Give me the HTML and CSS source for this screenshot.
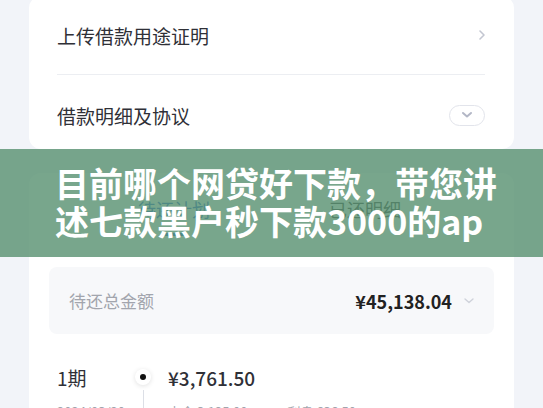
FILE: index.html
```html
<!DOCTYPE html>
<html lang="zh-CN">
<head>
    <meta charset="UTF-8">
    <title>借款详情</title>
    <link rel="stylesheet" href="styles.css">
</head>
<body>
    <div class="page">
        <div class="card card-menu">
            <div class="menu-row">
                <span>上传借款用途证明</span>
                <svg class="arrow-right" width="8" height="12" viewBox="0 0 8 12"><path d="M2 2l4 4-4 4" fill="none" stroke="#c3c6d1" stroke-width="1.6" stroke-linecap="round" stroke-linejoin="round"/></svg>
            </div>
            <div class="divider"></div>
            <div class="menu-row menu-row-last">
                <span>借款明细及协议</span>
                <span class="pill">
                    <svg width="12" height="8" viewBox="0 0 12 8"><path d="M2 2l4 3.5L10 2" fill="none" stroke="#b3b7c6" stroke-width="2" stroke-linecap="round" stroke-linejoin="round"/></svg>
                </span>
            </div>
        </div>

        <div class="card card-plan">
            <div class="tabs">
                <div class="tab active">
                    <span>待还计划</span>
                    <i class="tab-bar"></i>
                </div>
                <div class="tab">
                    <span>已还明细</span>
                </div>
            </div>

            <div class="summary">
                <span class="summary-label">待还总金额</span>
                <div class="summary-right">
                    <span class="summary-amount">¥45,138.04</span>
                    <svg width="12" height="8" viewBox="0 0 12 8"><path d="M2 2l4 3.5L10 2" fill="none" stroke="#cfd2da" stroke-width="1.4" stroke-linecap="round" stroke-linejoin="round"/></svg>
                </div>
            </div>

            <div class="plan-row">
                <span class="term">1期</span>
                <span class="dot"><i></i></span>
                <span class="amount">¥3,761.50</span>
                <span class="date">2024/03/20</span>
                <span class="line"></span>
                <span class="detail"><em>本金 3,125.00</em><em>利息 636.50</em></span>
            </div>
        </div>
    </div>

    <!-- 标题横幅，盖在页面内容上面 -->
    <div class="banner">
        <h1>目前哪个网贷好下款，带您讲<br>述七款黑户秒下款3000的ap</h1>
    </div>
</body>
</html>
```

FILE: styles.css
```css
body {
    margin: 0;
    background-color: #f2f4f9;
    font-family: "Noto Sans CJK SC", "Noto Sans", sans-serif;
    color: #2f3037;
    height: 408px;
    overflow: hidden;
}
.page {
    display: flex;
    flex-direction: column;
    gap: 24px;
    padding: 0 29px 0 29px;
    margin-top: -4px;
}
.card {
    background-color: #fff;
    border-radius: 12px;
}
.card-menu {
    padding: 0 29px 0 28px;
}
.menu-row {
    height: 78px;
    display: flex;
    align-items: center;
    justify-content: space-between;
    font-size: 19px;
}
.menu-row-last {
    height: 68px;
    padding-top: 6px;
}
.arrow-right {
    margin-right: -1px;
}
.divider {
    height: 1px;
    background-color: #eceef2;
}
.pill {
    width: 34px;
    height: 19px;
    border: 1px solid #e2e4eb;
    border-radius: 11px;
    display: flex;
    align-items: center;
    justify-content: center;
}
.card-plan {
    padding: 0 20px;
    height: 300px;
}
.tabs {
    display: flex;
    padding: 24px 0 0 89px;
    gap: 119px;
    height: 46px;
}
.tab {
    display: flex;
    flex-direction: column;
    align-items: center;
    font-size: 18px;
    line-height: 24px;
    color: #333;
}
.tab.active {
    color: #1d5fd6;
}
.tab-bar {
    width: 24px;
    height: 3px;
    border-radius: 2px;
    background-color: #1d5fd6;
    margin-top: 12px;
}
.summary {
    margin-top: 24px;
    height: 67px;
    background-color: #f7f8fa;
    border-radius: 8px;
    display: flex;
    align-items: center;
    justify-content: space-between;
    padding: 0 19px 0 20px;
}
.summary-label {
    font-size: 17px;
    color: #a2a5ad;
}
.summary-right {
    display: flex;
    align-items: center;
    gap: 11px;
}
.summary-amount {
    font-size: 18px;
    font-weight: bold;
    color: #222;
}
.plan-row {
    display: grid;
    grid-template-columns: 78px 16px 1fr;
    grid-template-rows: 26px 31px;
    padding: 30px 0 0 8px;
    align-items: center;
}
.term {
    font-size: 19px;
}
.dot {
    width: 16px;
    height: 16px;
    border-radius: 50%;
    background-color: #fff;
    box-shadow: 0 1px 5px rgba(0, 0, 0, 0.12);
    display: flex;
    align-items: center;
    justify-content: center;
}
.dot i {
    width: 6px;
    height: 6px;
    border-radius: 50%;
    background-color: #111;
}
.amount {
    padding-left: 17px;
    font-size: 19px;
    font-weight: 500;
}
.date,
.detail {
    font-size: 13px;
    color: #a2a5ad;
    align-self: end;
}
.detail {
    padding-left: 17px;
    display: flex;
    gap: 40px;
}
.detail em {
    font-style: normal;
}
.line {
    justify-self: center;
    width: 1px;
    height: 100%;
    background-color: #dcdfe6;
}
.banner {
    position: absolute;
    left: 0;
    right: 0;
    top: 149px;
    height: 108px;
    background-color: rgba(90, 146, 115, 0.82);
    box-sizing: border-box;
    padding: 15px 0 0 55px;
}
.banner h1 {
    margin: 0;
    font-size: 34px;
    line-height: 38px;
    font-weight: bold;
    color: #fff;
    white-space: nowrap;
}
```
